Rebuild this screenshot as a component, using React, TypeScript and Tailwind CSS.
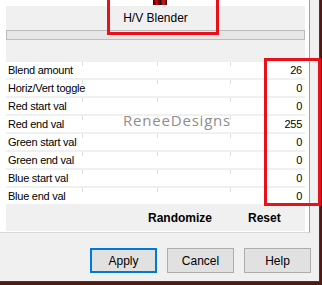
import React from 'react';

const rows: [string, string][] = [
  ['Blend amount', '26'],
  ['Horiz/Vert toggle', '0'],
  ['Red start val', '0'],
  ['Red end val', '255'],
  ['Green start val', '0'],
  ['Green end val', '0'],
  ['Blue start val', '0'],
  ['Blue end val', '0'],
];

const Tick = () => <div className="self-start h-[4px] w-px bg-[#dedede]" />;

export default function App() {
  return (
    <div className="relative w-[322px] h-[285px] overflow-hidden bg-[#4f1a14] font-['Liberation_Sans',Arial,sans-serif] text-black">
      <div className="w-[320px] h-[282px] bg-[#f0f0f0] border-r border-b border-[#3c3c3c] flex flex-col">
        {/* property sheet */}
        <div className="w-[310px] h-[233px] bg-white border-r border-b border-r-[#a0a0a0] border-b-[#d9d9d9] flex flex-col">
          <div className="h-[6px] flex justify-center pl-[10px]">
            <div className="flex h-[5px]">
              <div className="w-[7px] bg-gradient-to-r from-[#3a0000] via-[#c01010] to-[#5a0000]" />
              <div className="w-px bg-[#200000]" />
              <div className="w-[6px] bg-gradient-to-r from-[#8a0000] via-[#d02020] to-[#400000]" />
            </div>
          </div>
          <div className="ml-[6px] w-[299px] h-[225px] bg-[#f0f0f0] flex flex-col">
            <div className="h-[24px] flex items-center justify-center text-[12px]">H/V Blender</div>
            <div className="h-[10px] bg-[#e6e6e6] border border-[#bcbcbc]" />
            <div className="mt-[22px] flex flex-col gap-[2px]">
              {rows.map(([label, value]) => (
                <div
                  key={label}
                  className="h-[16px] bg-white grid grid-cols-[76px_75px_73px_1fr] items-center text-[11px] tracking-[-0.25px] leading-none"
                >
                  <span className="pl-[2px] whitespace-nowrap">{label}</span>
                  <Tick />
                  <Tick />
                  <div className="flex items-center justify-between h-full">
                    <Tick />
                    <span className="pr-[3px]">{value}</span>
                  </div>
                </div>
              ))}
            </div>
            <div className="mt-[2px] h-[24px] flex items-center text-[12px] font-bold">
              <span className="ml-[142px]">Randomize</span>
              <span className="ml-[36px]">Reset</span>
            </div>
          </div>
        </div>
        {/* buttons */}
        <div className="flex justify-end gap-[10px] pr-[8px] pt-[15px]">
          <button className="w-[67px] h-[25px] bg-[#e1e1e1] border-2 border-[#0078d7] text-[12px]">Apply</button>
          <button className="w-[67px] h-[25px] bg-[#e1e1e1] border border-[#adadad] text-[12px]">Cancel</button>
          <button className="w-[67px] h-[25px] bg-[#e1e1e1] border border-[#adadad] text-[12px]">Help</button>
        </div>
      </div>

      {/* watermark */}
      <div className="absolute left-[123px] top-[113px] text-[15px] leading-none tracking-[0.8px] text-[#8e8e8e] font-['Open_Sans',sans-serif] [text-shadow:0_0_1px_#fff,1px_1px_0_#fff,-1px_-1px_0_#fff]">
        ReneeDesigns
      </div>

      {/* red annotation boxes */}
      <div className="absolute left-[107px] top-[-3px] w-[112px] h-[38px] border-[3px] border-[#e8101a]" />
      <div className="absolute left-[264px] top-[58px] w-[57px] h-[148px] border-[3px] border-[#e8101a]" />
    </div>
  );
}
